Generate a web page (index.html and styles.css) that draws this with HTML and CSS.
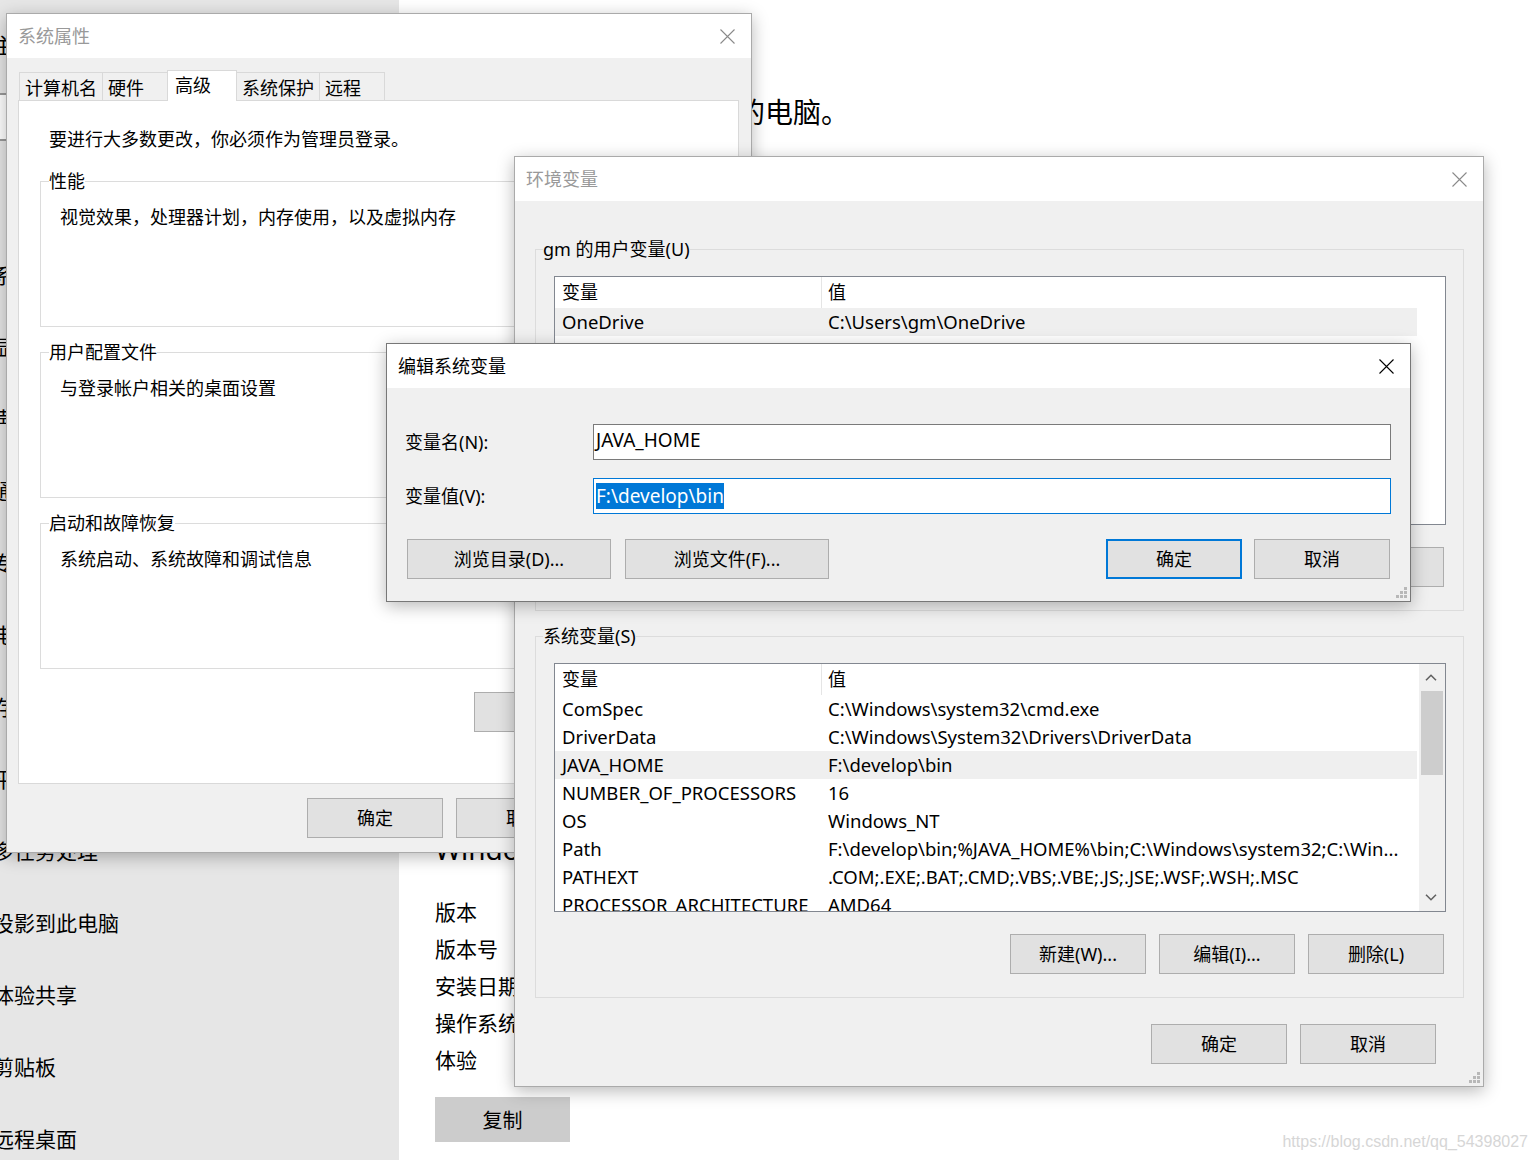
FILE: index.html
```html
<!DOCTYPE html>
<html lang="zh-CN">
<head>
    <meta charset="UTF-8">
    <title>环境变量</title>
    <link rel="stylesheet" href="styles.css">
</head>
<body>
<div class="desktop">

    <!-- settings app behind the dialogs -->
    <nav class="settings-nav">
        <div class="nav-title">主页</div>
        <div class="nav-search">查找设置</div>
        <div class="nav-list">
            <div class="nav-item">系统</div>
            <div class="nav-item">显示</div>
            <div class="nav-item">声音</div>
            <div class="nav-item">通知和操作</div>
            <div class="nav-item">专注助手</div>
            <div class="nav-item">电源和睡眠</div>
            <div class="nav-item">存储</div>
            <div class="nav-item">平板电脑</div>
            <div class="nav-item">多任务处理</div>
            <div class="nav-item">投影到此电脑</div>
            <div class="nav-item">体验共享</div>
            <div class="nav-item">剪贴板</div>
            <div class="nav-item">远程桌面</div>
        </div>
    </nav>

    <main class="settings-page">
        <p class="page-heading">正在监视和保护你的电脑。</p>
        <h2 class="spec-heading">Windows 规格</h2>
        <div class="spec-list">
            <span>版本</span><span>Windows 10 专业版</span>
            <span>版本号</span><span>21H1</span>
            <span>安装日期</span><span>2021/10/12</span>
            <span>操作系统内部版本</span><span>19043.1288</span>
            <span>体验</span><span>Windows Feature Experience Pack 120.2212.3920.0</span>
        </div>
        <button class="copy-button">复制</button>
    </main>

    <!-- 系统属性 -->
    <div class="window sysprops">
        <div class="titlebar">
            <span class="title">系统属性</span>
            <svg class="close" viewBox="0 0 15 15"><path d="M0.5 0.5L14.5 14.5M14.5 0.5L0.5 14.5"/></svg>
        </div>
        <div class="window-body">
            <div class="tabs">
                <div class="tab">计算机名</div>
                <div class="tab">硬件</div>
                <div class="tab selected">高级</div>
                <div class="tab">系统保护</div>
                <div class="tab">远程</div>
            </div>
            <div class="tab-panel">
                <p class="intro">要进行大多数更改，你必须作为管理员登录。</p>
                <fieldset class="group">
                    <legend>性能</legend>
                    <div class="group-body">
                        <p class="group-text">视觉效果，处理器计划，内存使用，以及虚拟内存</p>
                        <div class="group-actions"><button class="btn">设置(S)...</button></div>
                    </div>
                </fieldset>
                <fieldset class="group">
                    <legend>用户配置文件</legend>
                    <div class="group-body">
                        <p class="group-text">与登录帐户相关的桌面设置</p>
                        <div class="group-actions"><button class="btn">设置(E)...</button></div>
                    </div>
                </fieldset>
                <fieldset class="group">
                    <legend>启动和故障恢复</legend>
                    <div class="group-body">
                        <p class="group-text">系统启动、系统故障和调试信息</p>
                        <div class="group-actions"><button class="btn">设置(T)...</button></div>
                    </div>
                </fieldset>
                <div class="panel-actions">
                    <button class="btn wide">环境变量(N)...</button>
                </div>
            </div>
            <div class="dialog-actions sysprops-actions">
                <button class="btn">确定</button>
                <button class="btn">取消</button>
                <button class="btn">应用(A)</button>
            </div>
        </div>
    </div>

    <!-- 环境变量 -->
    <div class="window envvars">
        <div class="titlebar">
            <span class="title">环境变量</span>
            <svg class="close" viewBox="0 0 15 15"><path d="M0.5 0.5L14.5 14.5M14.5 0.5L0.5 14.5"/></svg>
        </div>
        <div class="window-body">
            <fieldset class="env-group">
                <legend>gm 的用户变量(U)</legend>
                <div class="listview">
                    <div class="list-rows">
                        <div class="list-row header"><span class="col-name">变量</span><span class="col-value">值</span></div>
                        <div class="list-row selected"><span class="col-name">OneDrive</span><span class="col-value">C:\Users\gm\OneDrive</span></div>
                        <div class="list-row"><span class="col-name">Path</span><span class="col-value">C:\Users\gm\AppData\Local\Microsoft\WindowsApps;</span></div>
                        <div class="list-row"><span class="col-name">TEMP</span><span class="col-value">C:\Users\gm\AppData\Local\Temp</span></div>
                        <div class="list-row"><span class="col-name">TMP</span><span class="col-value">C:\Users\gm\AppData\Local\Temp</span></div>
                    </div>
                </div>
                <div class="group-buttons">
                    <button class="btn">新建(N)...</button>
                    <button class="btn">编辑(E)...</button>
                    <button class="btn">删除(D)</button>
                </div>
            </fieldset>

            <fieldset class="env-group">
                <legend>系统变量(S)</legend>
                <div class="listview">
                    <div class="list-rows">
                        <div class="list-row header"><span class="col-name">变量</span><span class="col-value">值</span></div>
                        <div class="list-row"><span class="col-name">ComSpec</span><span class="col-value">C:\Windows\system32\cmd.exe</span></div>
                        <div class="list-row"><span class="col-name">DriverData</span><span class="col-value">C:\Windows\System32\Drivers\DriverData</span></div>
                        <div class="list-row selected"><span class="col-name">JAVA_HOME</span><span class="col-value">F:\develop\bin</span></div>
                        <div class="list-row"><span class="col-name">NUMBER_OF_PROCESSORS</span><span class="col-value">16</span></div>
                        <div class="list-row"><span class="col-name">OS</span><span class="col-value">Windows_NT</span></div>
                        <div class="list-row"><span class="col-name">Path</span><span class="col-value">F:\develop\bin;%JAVA_HOME%\bin;C:\Windows\system32;C:\Win...</span></div>
                        <div class="list-row"><span class="col-name">PATHEXT</span><span class="col-value">.COM;.EXE;.BAT;.CMD;.VBS;.VBE;.JS;.JSE;.WSF;.WSH;.MSC</span></div>
                        <div class="list-row"><span class="col-name">PROCESSOR_ARCHITECTURE</span><span class="col-value">AMD64</span></div>
                    </div>
                    <div class="scrollbar">
                        <div class="scroll-arrow">
                            <svg viewBox="0 0 12 7"><polyline points="1,6.3 6,1.2 11,6.3"/></svg>
                        </div>
                        <div class="scroll-thumb"></div>
                        <div class="scroll-track"></div>
                        <div class="scroll-arrow">
                            <svg viewBox="0 0 12 7"><polyline points="1,0.7 6,5.8 11,0.7"/></svg>
                        </div>
                    </div>
                </div>
                <div class="group-buttons">
                    <button class="btn">新建(W)...</button>
                    <button class="btn">编辑(I)...</button>
                    <button class="btn">删除(L)</button>
                </div>
            </fieldset>

            <div class="dialog-actions env-actions">
                <button class="btn">确定</button>
                <button class="btn">取消</button>
            </div>
        </div>
        <svg class="grip" viewBox="0 0 11 11"><rect x="8" y="0" width="3" height="3"/><rect x="4" y="4" width="3" height="3"/><rect x="8" y="4" width="3" height="3"/><rect x="0" y="8" width="3" height="3"/><rect x="4" y="8" width="3" height="3"/><rect x="8" y="8" width="3" height="3"/></svg>
    </div>

    <!-- 编辑系统变量 -->
    <div class="window editvar active">
        <div class="titlebar">
            <span class="title">编辑系统变量</span>
            <svg class="close" viewBox="0 0 15 15"><path d="M0.5 0.5L14.5 14.5M14.5 0.5L0.5 14.5"/></svg>
        </div>
        <div class="window-body">
            <div class="field-row">
                <span class="field-label">变量名(N):</span>
                <div class="text-field">JAVA_HOME</div>
            </div>
            <div class="field-row">
                <span class="field-label">变量值(V):</span>
                <div class="text-field focused"><span class="selection">F:\develop\bin</span></div>
            </div>
            <div class="edit-buttons">
                <div class="button-group">
                    <button class="btn browse">浏览目录(D)...</button>
                    <button class="btn browse">浏览文件(F)...</button>
                </div>
                <div class="button-group tight">
                    <button class="btn default">确定</button>
                    <button class="btn">取消</button>
                </div>
            </div>
        </div>
        <svg class="grip" viewBox="0 0 11 11"><rect x="8" y="0" width="3" height="3"/><rect x="4" y="4" width="3" height="3"/><rect x="8" y="4" width="3" height="3"/><rect x="0" y="8" width="3" height="3"/><rect x="4" y="8" width="3" height="3"/><rect x="8" y="8" width="3" height="3"/></svg>
    </div>

    <div class="watermark">https://blog.csdn.net/qq_54398027</div>
</div>
</body>
</html>
```

FILE: styles.css
```css
:root {
    --face: #f0f0f0;
    --button: #e1e1e1;
    --button-border: #adadad;
    --group-line: #dcdcdc;
    --accent: #0078d7;
}

* {
    box-sizing: border-box;
}

html, body {
    margin: 0;
    padding: 0;
}

body {
    width: 1538px;
    height: 1160px;
    overflow: hidden;
    font-family: "Noto Sans", "Noto Sans CJK SC", sans-serif;
    font-size: 18px;
    color: #000;
    background: #fff;
}

p {
    margin: 0;
}

.desktop {
    position: relative;
    display: flex;
    width: 1538px;
    height: 1160px;
}

/* settings app */

.settings-nav {
    width: 399px;
    flex: none;
    background: #e6e6e6;
    padding-top: 25px;
    font-size: 21px;
    overflow: hidden;
}

.nav-title {
    height: 40px;
    line-height: 40px;
    margin-left: -7px;
}

.nav-search {
    margin: 28px 0 0 -30px;
    width: 390px;
    height: 48px;
    border: 2px solid #999;
    background: #fff;
    padding-left: 40px;
    line-height: 44px;
    font-size: 18px;
    color: #666;
}

.nav-list {
    margin-top: 98px;
}

.nav-item {
    height: 72px;
    line-height: 72px;
    margin-left: -7px;
    white-space: nowrap;
}

.settings-page {
    flex: 1;
    padding: 92px 0 0 36px;
    font-size: 21px;
}

.page-heading {
    width: 414px;
    font-size: 28px;
    line-height: 40px;
    text-align: right;
    white-space: nowrap;
}

.spec-heading {
    margin: 697px 0 0;
    font-size: 28px;
    font-weight: normal;
    line-height: 40px;
}

.spec-list {
    display: grid;
    grid-template-columns: 200px auto;
    margin-top: 25px;
    line-height: 37px;
    white-space: nowrap;
}

.copy-button {
    display: block;
    margin-top: 18px;
    width: 135px;
    height: 45px;
    border: none;
    background: #ccc;
    font-family: inherit;
    font-size: 20px;
    color: #000;
    padding: 0;
}

/* windows */

.window {
    position: absolute;
    display: flex;
    flex-direction: column;
    background: var(--face);
    border: 1px solid #aaa;
    box-shadow: 0 4px 16px rgba(0,0,0,0.28);
}

.window.active {
    border-color: #777;
}

.titlebar {
    flex: none;
    height: 44px;
    background: #fff;
    display: flex;
    align-items: center;
    justify-content: space-between;
    padding: 0 16px 0 11px;
}

.title {
    color: #999;
    line-height: 24px;
}

.active .title {
    color: #000;
}

.close {
    width: 15px;
    height: 15px;
    fill: none;
    stroke: #8a8a8a;
    stroke-width: 1.1;
}

.active .close {
    stroke: #000;
}

.window-body {
    flex: 1;
}

.grip {
    position: absolute;
    right: 3px;
    bottom: 3px;
    width: 11px;
    height: 11px;
    fill: #b8b8b8;
}

.sysprops {
    left: 6px;
    top: 13px;
    width: 746px;
    height: 840px;
}

.envvars {
    left: 514px;
    top: 156px;
    width: 970px;
    height: 931px;
}

.editvar {
    left: 386px;
    top: 343px;
    width: 1025px;
    height: 259px;
}

/* buttons */

.btn {
    width: 136px;
    height: 40px;
    padding: 0;
    background: var(--button);
    border: 1px solid var(--button-border);
    font-family: inherit;
    font-size: 18px;
    line-height: 24px;
    color: #000;
    white-space: nowrap;
}

.btn.default {
    border: 2px solid var(--accent);
}

.btn.browse {
    width: 204px;
}

.btn.wide {
    width: 244px;
}

.dialog-actions {
    display: flex;
    justify-content: flex-end;
    gap: 13px;
}

/* 系统属性 */

.sysprops .window-body {
    padding: 12px 12px 0 11px;
}

.tabs {
    display: flex;
    align-items: flex-end;
    height: 30px;
    padding-left: 1px;
}

.tab {
    height: 28px;
    min-width: 66px;
    padding: 0 5px;
    margin-right: -1px;
    border: 1px solid #d9d9d9;
    border-bottom: none;
    background: var(--face);
    line-height: 30px;
    white-space: nowrap;
}

.tab.selected {
    position: relative;
    z-index: 1;
    height: 31px;
    min-width: 70px;
    padding-left: 7px;
    margin-bottom: -1px;
    background: #fff;
    line-height: 29px;
}

.tab-panel {
    height: 684px;
    background: #fff;
    border: 1px solid #d9d9d9;
    padding: 26px 20px 0 21px;
}

.intro {
    margin-left: 9px;
    line-height: 24px;
}

.group {
    margin: 18px 0 0;
    padding: 12px 17px 0 8px;
    border: 1px solid var(--group-line);
    min-width: 0;
}

.group + .group {
    margin-top: 13px;
}

.group legend,
.env-group legend {
    padding: 0;
    line-height: 24px;
}

.group-body {
    height: 121px;
    display: flex;
    flex-direction: column;
    justify-content: space-between;
}

.group-text {
    margin-left: 11px;
    line-height: 24px;
}

.group-actions {
    display: flex;
    justify-content: flex-end;
    padding-bottom: 12px;
}

.panel-actions {
    display: flex;
    justify-content: flex-end;
    margin-top: 23px;
}

.sysprops-actions {
    margin: 14px -2px 0 0;
}

/* 环境变量 */

.envvars .window-body {
    padding: 36px 19px 0 20px;
}

.env-group {
    margin: 0;
    padding: 15px 17px 23px 7px;
    border: 1px solid var(--group-line);
    min-width: 0;
}

.env-group + .env-group {
    margin-top: 13px;
}

.listview {
    display: flex;
    width: 892px;
    height: 249px;
    margin-left: 11px;
    border: 1px solid #828790;
    background: #fff;
    overflow: hidden;
}

.list-rows {
    flex: 1;
    overflow: hidden;
}

.list-row {
    display: flex;
    width: 862px;
    height: 28px;
    line-height: 28px;
    font-size: 18.5px;
    white-space: nowrap;
}

.list-row.header {
    height: 31px;
    line-height: 31px;
    font-size: 18px;
}

.list-row.selected {
    background: #efefef;
}

.col-name {
    flex: none;
    width: 267px;
    padding-left: 7px;
    overflow: hidden;
}

.col-value {
    flex: none;
    width: 595px;
    padding-left: 6px;
    overflow: hidden;
    text-overflow: ellipsis;
}

.header .col-name {
    border-right: 1px solid #e5e5e5;
}

.scrollbar {
    flex: none;
    width: 26px;
    display: flex;
    flex-direction: column;
    background: var(--face);
}

.scroll-arrow {
    height: 27px;
    display: flex;
    align-items: center;
    justify-content: center;
    padding-right: 2px;
}

.scroll-arrow svg {
    width: 12px;
    height: 7px;
    fill: none;
    stroke: #606060;
    stroke-width: 1.5;
}

.scroll-thumb {
    height: 84px;
    margin: 0 2px;
    background: #cdcdcd;
}

.scroll-track {
    flex: 1;
}

.group-buttons {
    display: flex;
    justify-content: flex-end;
    gap: 13px;
    margin-top: 22px;
    padding-right: 2px;
}

.env-actions {
    margin-top: 26px;
    padding-right: 28px;
}

/* 编辑系统变量 */

.editvar .window-body {
    padding: 36px 19px 0 18px;
}

.field-row {
    display: flex;
    align-items: center;
    height: 36px;
}

.field-row + .field-row {
    margin-top: 18px;
}

.field-label {
    flex: none;
    width: 188px;
    line-height: 24px;
}

.text-field {
    flex: 1;
    height: 36px;
    background: #fff;
    border: 1px solid #7a7a7a;
    padding-left: 2px;
    font-size: 19px;
    line-height: 31px;
    white-space: nowrap;
}

.text-field.focused {
    border-color: var(--accent);
}

.selection {
    display: inline-block;
    vertical-align: middle;
    line-height: 26px;
    background: var(--accent);
    color: #fff;
}

.edit-buttons {
    display: flex;
    justify-content: space-between;
    margin-top: 25px;
    padding: 0 1px 0 2px;
}

.button-group {
    display: flex;
    gap: 14px;
}

.button-group.tight {
    gap: 12px;
}

.watermark {
    position: absolute;
    right: 10px;
    bottom: 8px;
    font-family: "Liberation Sans", sans-serif;
    font-size: 16px;
    line-height: 20px;
    color: #d6d6d6;
}
```
